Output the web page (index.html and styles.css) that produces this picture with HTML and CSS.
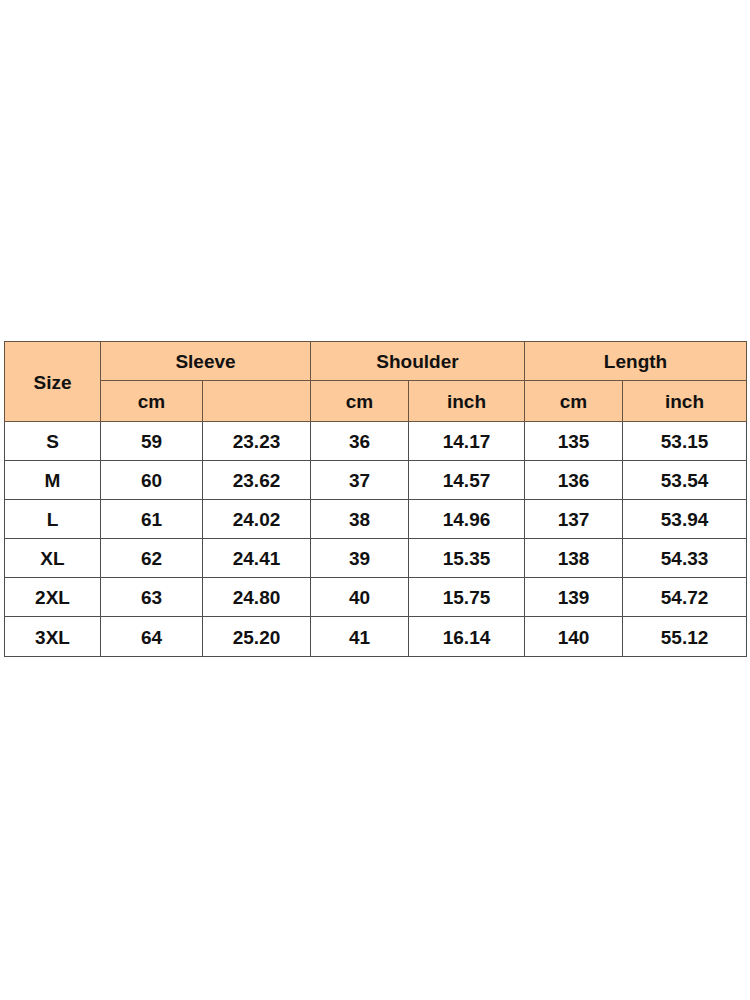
FILE: index.html
```html
<!DOCTYPE html>
<html>
<head>
<meta charset="utf-8">
<link rel="stylesheet" href="styles.css">
</head>
<body>
<main class="page">
<table class="size-table">
<colgroup>
<col class="c1"><col class="c2"><col class="c3"><col class="c4"><col class="c5"><col class="c6"><col class="c7">
</colgroup>
<thead>
<tr class="h1">
<th rowspan="2">Size</th>
<th colspan="2">Sleeve</th>
<th colspan="2">Shoulder</th>
<th colspan="2">Length</th>
</tr>
<tr class="h2">
<th>cm</th><th></th><th>cm</th><th>inch</th><th>cm</th><th>inch</th>
</tr>
</thead>
<tbody>
<tr><td>S</td><td>59</td><td>23.23</td><td>36</td><td>14.17</td><td>135</td><td>53.15</td></tr>
<tr><td>M</td><td>60</td><td>23.62</td><td>37</td><td>14.57</td><td>136</td><td>53.54</td></tr>
<tr><td>L</td><td>61</td><td>24.02</td><td>38</td><td>14.96</td><td>137</td><td>53.94</td></tr>
<tr><td>XL</td><td>62</td><td>24.41</td><td>39</td><td>15.35</td><td>138</td><td>54.33</td></tr>
<tr><td>2XL</td><td>63</td><td>24.80</td><td>40</td><td>15.75</td><td>139</td><td>54.72</td></tr>
<tr class="last"><td>3XL</td><td>64</td><td>25.20</td><td>41</td><td>16.14</td><td>140</td><td>55.12</td></tr>
</tbody>
</table>
</main>
</body>
</html>
```
FILE: styles.css
```css
html, body {
  margin: 0;
  padding: 0;
  background: #ffffff;
}
.page {
  width: 750px;
  height: 1000px;
  padding: 341px 4px 0 4px;
  box-sizing: border-box;
}
.size-table {
  width: 743px;
  border-collapse: collapse;
  table-layout: fixed;
  font-family: "Liberation Sans", Arial, sans-serif;
  font-weight: bold;
  font-size: 19px;
  color: #111111;
  text-align: center;
}
.c1 { width: 96px; }
.c2 { width: 102px; }
.c3 { width: 108px; }
.c4 { width: 98px; }
.c5 { width: 116px; }
.c6 { width: 98px; }
.c7 { width: 124px; }
.size-table th,
.size-table td {
  border: 1px solid #4e4e4e;
  padding: 2px 0 0 0;
  vertical-align: middle;
}
.size-table th {
  background: #fdca9b;
  font-weight: bold;
  border-color: #6a5442;
}
.h1 th { height: 36px; }
.h2 th { height: 38px; }
.size-table td { height: 36px; }
.size-table .last td { height: 37px; }
```
